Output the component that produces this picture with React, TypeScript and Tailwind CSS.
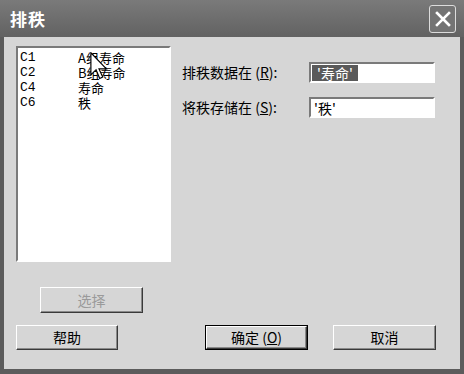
const cjk = "font-['Noto_Sans_CJK_SC','Noto_Sans',sans-serif]"

function Button({ children, className = '', disabled = false, primary = false }: { children: React.ReactNode; className?: string; disabled?: boolean; primary?: boolean }) {
  return (
    <div className={`${primary ? 'border border-black' : ''} ${className}`}>
      <div
        className={`h-full flex items-center justify-center border border-t-white border-l-white border-b-[#3a3a3a] border-r-[#3a3a3a] shadow-[inset_-1px_-1px_0_#8a8a8a] bg-[#d6d6d6] text-[14px] ${disabled ? 'text-[#9a9a9a]' : 'text-black'}`}
      >
        {children}
      </div>
    </div>
  )
}

const columns = [
  { id: 'C1', name: 'A组寿命' },
  { id: 'C2', name: 'B组寿命' },
  { id: 'C4', name: '寿命' },
  { id: 'C6', name: '秩' },
]

export default function App() {
  return (
    <div className={`w-[464px] h-[374px] bg-[#5c5c5c] flex flex-col ${cjk}`}>
      {/* title bar */}
      <div className="h-[37px] flex items-center justify-between pl-[10px] pr-[8px] bg-gradient-to-b from-[#7a7a7a] to-[#626262]">
        <span className="text-white font-bold text-[17px] tracking-[1px]">排秩</span>
        <div className="w-[27px] h-[28px] rounded-[3px] border border-[#dcdcdc] bg-[#747474] flex items-center justify-center">
          <svg width="16" height="16" viewBox="0 0 16 16">
            <path d="M2 2 L14 14 M14 2 L2 14" stroke="white" strokeWidth="2.6" strokeLinecap="square" />
          </svg>
        </div>
      </div>

      {/* body */}
      <div className="flex-1 mx-[4px] mb-[5px] bg-[#d6d6d6] pl-[12px] pt-[9px] flex flex-col">
        <div className="flex">
          <div className="relative w-[155px] h-[216px] border-2 border-t-[#7a7a7a] border-l-[#7a7a7a] border-b-white border-r-white bg-white">
            <div className="pt-[2px] pl-[2px] font-['Liberation_Mono','Noto_Sans_CJK_SC',monospace] text-[13px] leading-[15px] text-black">
              {columns.map((c) => (
                <div key={c.id} className="flex h-[15px]">
                  <span className="w-[58px]">{c.id}</span>
                  <span className={`${cjk} text-[13px] leading-[15px]`}>{c.name}</span>
                </div>
              ))}
            </div>
            {/* mouse pointer */}
            <svg className="absolute left-[72px] top-[4px]" width="18" height="28" viewBox="0 0 12 19">
              <path d="M0.5 0.5 L0.5 15.5 L4 12 L6.5 18 L8.5 17 L6 11.5 L11 11.5 Z" fill="white" stroke="black" strokeWidth="0.8" strokeLinejoin="miter" />
            </svg>
          </div>

          <div className="ml-[11px] pt-[16px] flex flex-col gap-[14px] text-[14px] text-black">
            <div className="flex items-center h-[21px]">
              <span className="w-[127px]">
                排秩数据在 (<span className="underline">R</span>):
              </span>
              <div className="w-[126px] h-[21px] border-2 border-t-[#7a7a7a] border-l-[#7a7a7a] border-b-white border-r-white bg-white flex items-center pl-[1px]">
                <span className="bg-[#5a5a5a] text-white px-[5px] leading-[16px]">'寿命'</span>
              </div>
            </div>
            <div className="flex items-center h-[21px]">
              <span className="w-[127px]">
                将秩存储在 (<span className="underline">S</span>):
              </span>
              <div className="w-[126px] h-[21px] border-2 border-t-[#7a7a7a] border-l-[#7a7a7a] border-b-white border-r-white bg-white flex items-center pl-[3px]">
                <span className="leading-[16px]">'秩'</span>
              </div>
            </div>
          </div>
        </div>

        <Button className="ml-[24px] mt-[25px] w-[103px] h-[26px]" disabled>
          选择
        </Button>

        <div className="flex mt-[12px] h-[25px]">
          <Button className="w-[102px]">帮助</Button>
          <Button className="ml-[87px] w-[103px]" primary>
            确定 (<span className="underline">O</span>)
          </Button>
          <Button className="ml-[25px] w-[103px]">取消</Button>
        </div>
      </div>
    </div>
  )
}
